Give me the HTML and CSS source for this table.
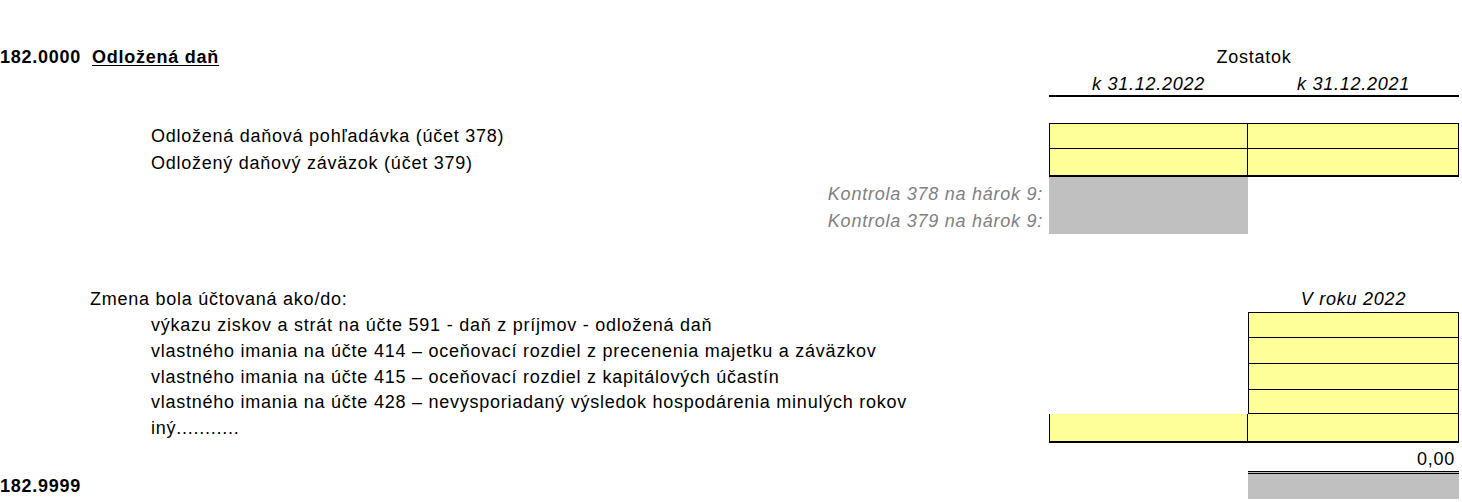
FILE: index.html
```html
<!DOCTYPE html>
<html lang="sk">
<head>
<meta charset="utf-8">
<title>182.0000 Odložená daň</title>
<link rel="stylesheet" href="styles.css">
</head>
<body>
<div class="sheet">
  <div class="row r-title">
    <div class="label"><span class="code">182.0000</span><span class="title">Odložená daň</span></div>
    <div class="span2 center">Zostatok</div>
  </div>
  <div class="row r-dates">
    <div class="label"></div>
    <div class="c1 center italic">k 31.12.2022</div>
    <div class="c2 center italic">k 31.12.2021</div>
  </div>
  <div class="row r-gap1"></div>
  <div class="row r-y first">
    <div class="label ind">Odložená daňová pohľadávka (účet 378)</div>
    <div class="c1 yel bl bt"></div>
    <div class="c2 yel bt"></div>
  </div>
  <div class="row r-y last">
    <div class="label ind">Odložený daňový záväzok (účet 379)</div>
    <div class="c1 yel bl"></div>
    <div class="c2 yel"></div>
  </div>
  <div class="row r-k">
    <div class="label kontrola">Kontrola 378 na hárok 9:</div>
    <div class="c1 grey"></div>
  </div>
  <div class="row r-k r-k2">
    <div class="label kontrola">Kontrola 379 na hárok 9:</div>
    <div class="c1 grey"></div>
  </div>
  <div class="row r-gap2"></div>
  <div class="row r-zmena">
    <div class="label sub">Zmena bola účtovaná ako/do:</div>
    <div class="c1"></div>
    <div class="c2 center italic">V roku 2022</div>
  </div>
  <div class="row r-y">
    <div class="label ind">výkazu ziskov a strát na účte 591 - daň z príjmov - odložená daň</div>
    <div class="c1 empty"></div>
    <div class="c2 yel bl bt"></div>
  </div>
  <div class="row r-y">
    <div class="label ind">vlastného imania na účte 414 – oceňovací rozdiel z precenenia majetku a záväzkov</div>
    <div class="c1 empty"></div>
    <div class="c2 yel bl"></div>
  </div>
  <div class="row r-y">
    <div class="label ind">vlastného imania na účte 415 – oceňovací rozdiel z kapitálových účastín</div>
    <div class="c1 empty"></div>
    <div class="c2 yel bl"></div>
  </div>
  <div class="row r-y r-short">
    <div class="label ind">vlastného imania na účte 428 – nevysporiadaný výsledok hospodárenia minulých rokov</div>
    <div class="c1 empty"></div>
    <div class="c2 yel bl"></div>
  </div>
  <div class="row r-y last last2">
    <div class="label ind">iný...........</div>
    <div class="c1 yel bl"></div>
    <div class="c2 yel"></div>
  </div>
  <div class="row r-sum">
    <div class="label"></div>
    <div class="c1"></div>
    <div class="c2 right">0,00</div>
  </div>
  <div class="row r-end">
    <div class="label"><span class="code">182.9999</span></div>
    <div class="c1"></div>
    <div class="c2 grey dbl"></div>
  </div>
</div>
</body>
</html>
```
FILE: styles.css
```css
*, *::before, *::after {
  box-sizing: border-box;
}
html, body {
  margin: 0;
  padding: 0;
  background: #fff;
}
body {
  font-family: "Liberation Sans", Arial, sans-serif;
  font-size: 18px;
  letter-spacing: 0.75px;
  color: #000;
}
.sheet {
  padding-top: 44px;
  width: 1462px;
}
.row {
  display: flex;
  align-items: stretch;
  height: 26px;
}
.label {
  flex: 0 0 1049px;
  display: flex;
  align-items: center;
  white-space: nowrap;
  overflow: hidden;
}
.c1 {
  flex: 0 0 199px;
  display: flex;
  align-items: center;
}
.c2 {
  flex: 0 0 211px;
  display: flex;
  align-items: center;
}
.span2 {
  flex: 0 0 410px;
  display: flex;
  align-items: center;
}
.center { justify-content: center; }
.right { justify-content: flex-end; padding-right: 4px; }
.italic { font-style: italic; }
.code {
  font-weight: bold;
  margin-right: 11px;
}
.title {
  font-weight: bold;
  text-decoration: underline;
  text-underline-offset: 2px;
}
.r-dates {
  height: 27px;
}
.r-dates .c1, .r-dates .c2 {
  border-bottom: 2px solid #000;
  padding-top: 3px;
}
.r-gap1 { height: 26px; }
.ind { padding-left: 151px; }
.sub { padding-left: 90px; }
.yel {
  background: #ffff99;
  border-right: 1px solid #000;
  border-bottom: 1px solid #000;
}
.bl { border-left: 1px solid #000; }
.bt { border-top: 1px solid #000; }
.r-y { height: 26px; }
.r-y.first { height: 26px; }
.r-y.last { height: 28px; }
.r-y.last2 { height: 29px; }
.r-y.last .yel { border-bottom: 2px solid #000; }
.r-short { height: 24px; }
.r-k { height: 29px; }
.r-k .label { padding-top: 6px; }
.r-k2 { height: 28px; }
.r-k2 .label { padding-top: 2px; }
.kontrola {
  justify-content: flex-end;
  padding-right: 6px;
  color: #808080;
  font-style: italic;
}
.grey { background: #c0c0c0; }
.r-gap2 { height: 51px; }
.r-zmena { height: 27px; }
.r-zmena .label, .r-zmena .c2 { padding-top: 2px; }
.r-sum { height: 28px; }
.r-sum .c2 { padding-top: 4px; }
.r-end { height: 28px; }
.r-end .label { padding-top: 2px; }
.dbl {
  border-top: 3px double #000;
}
```
